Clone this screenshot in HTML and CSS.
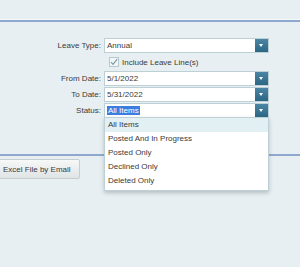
FILE: index.html
```html
<!DOCTYPE html>
<html lang="en">
<head>
  <meta charset="UTF-8">
  <title>Leave Report</title>
  <link rel="stylesheet" href="styles.css">
</head>
<body>
  <div class="topbar"></div>
  <div class="rule"></div>

  <form class="filters">
    <label class="lbl">Leave Type:</label>
    <div class="combo">
      <span class="value">Annual</span>
      <span class="arrow"></span>
    </div>

    <span></span>
    <div class="check-row">
      <span class="checkbox">
        <svg width="10" height="10" viewBox="0 0 10 10"><path d="M2 5.2 L4 7.4 L8.2 2.2" fill="none" stroke="#7a9aa6" stroke-width="1.1"/></svg>
      </span>
      <span>Include Leave Line(s)</span>
    </div>

    <label class="lbl">From Date:</label>
    <div class="combo">
      <span class="value">5/1/2022</span>
      <span class="arrow"></span>
    </div>

    <label class="lbl">To Date:</label>
    <div class="combo">
      <span class="value">5/31/2022</span>
      <span class="arrow"></span>
    </div>

    <label class="lbl">Status:</label>
    <div class="combo status">
      <span class="value"><span class="selected">All Items</span></span>
      <span class="arrow"></span>
    </div>
  </form>

  <div class="rule second"></div>

  <button class="btn">Excel File by Email</button>

  <ul class="dropdown">
    <li class="hover">All Items</li>
    <li>Posted And In Progress</li>
    <li>Posted Only</li>
    <li>Declined Only</li>
    <li>Deleted Only</li>
  </ul>
</body>
</html>
```

FILE: styles.css
```css
html {
  background-color: #e8eff2;
}
body {
  margin: 0;
  min-height: 267px;
  background-color: #e8eff2;
  font-family: "Liberation Sans", Arial, sans-serif;
  font-size: 8px;
  color: #3a3a3a;
  position: relative;
}
.topbar {
  height: 19px;
  border-bottom: 1px solid #f6f9fa;
}
.rule {
  height: 2px;
  background-color: #8ea8cf;
}
.filters {
  display: grid;
  grid-template-columns: 101px 165px;
  grid-auto-rows: 15px;
  grid-template-rows: 15px 16px;
  column-gap: 3px;
  row-gap: 1px;
  margin: 0;
  padding-top: 16px;
}
.lbl {
  text-align: right;
  line-height: 15px;
}
.combo {
  display: flex;
  background: #fff;
  border: 1px solid #bcd0d5;
  box-sizing: border-box;
}
.value {
  flex: 1;
  padding-left: 2px;
  line-height: 13px;
}
.arrow {
  width: 13px;
  background: linear-gradient(#4a86a3, #2b6785);
  position: relative;
}
.arrow::after {
  content: "";
  position: absolute;
  left: 4px;
  top: 5px;
  border-left: 2.5px solid transparent;
  border-right: 2.5px solid transparent;
  border-top: 3px solid #fff;
}
.selected {
  background: #3c7ee0;
  color: #fff;
  padding: 0 1px;
}
.check-row {
  display: flex;
  align-items: center;
  gap: 3px;
  padding-left: 5px;
}
.checkbox {
  width: 10px;
  height: 10px;
  border: 1px solid #b6c9cf;
  background: #f2f6f7;
  box-sizing: border-box;
  display: flex;
}
.checkbox svg {
  margin: -1px;
}
.dropdown {
  position: absolute;
  top: 117px;
  left: 104px;
  width: 165px;
  margin: 0;
  padding: 0 0 2px;
  list-style: none;
  background: #fff;
  border: 1px solid #bcd0d5;
  box-sizing: border-box;
  box-shadow: 0 2px 4px rgba(90, 100, 110, 0.35);
}
.dropdown li {
  height: 14px;
  line-height: 14px;
  padding-left: 3px;
}
.dropdown .hover {
  background: #e2f0f4;
}
.rule.second {
  margin-top: 36px;
}
.btn {
  display: block;
  margin: 3px 0 0 -3px;
  height: 20px;
  padding: 0 8px 0 5px;
  font-family: "Liberation Sans", Arial, sans-serif;
  font-size: 8px;
  color: #3a3a3a;
  background: linear-gradient(#f7f8f8, #dfe4e5);
  border: 1px solid #c5cdcf;
  border-radius: 2px;
}
```
